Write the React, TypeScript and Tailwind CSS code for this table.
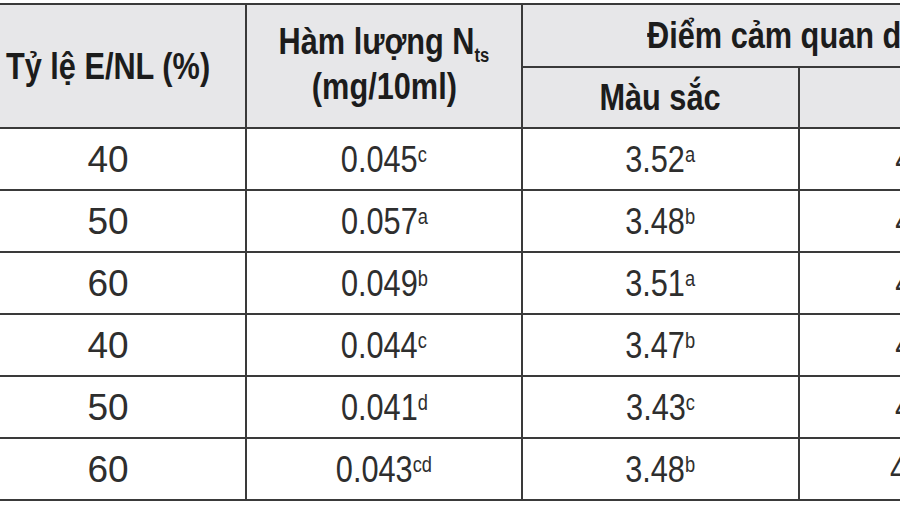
import React from 'react';

type Row = {
  ratio: string;
  nts: string;
  ntsSup: string;
  mau: string;
  mauSup: string;
  mui: string;
  muiSup: string;
  vi: string;
  viSup: string;
};

const rows: Row[] = [
  { ratio: '40', nts: '0.045', ntsSup: 'c', mau: '3.52', mauSup: 'a', mui: '4.26', muiSup: 'a', vi: '4.12', viSup: 'b' },
  { ratio: '50', nts: '0.057', ntsSup: 'a', mau: '3.48', mauSup: 'b', mui: '4.31', muiSup: 'a', vi: '4.35', viSup: 'a' },
  { ratio: '60', nts: '0.049', ntsSup: 'b', mau: '3.51', mauSup: 'a', mui: '4.18', muiSup: 'b', vi: '4.20', viSup: 'b' },
  { ratio: '40', nts: '0.044', ntsSup: 'c', mau: '3.47', mauSup: 'b', mui: '4.15', muiSup: 'b', vi: '4.08', viSup: 'c' },
  { ratio: '50', nts: '0.041', ntsSup: 'd', mau: '3.43', mauSup: 'c', mui: '4.02', muiSup: 'c', vi: '3.96', viSup: 'd' },
  { ratio: '60', nts: '0.043', ntsSup: 'cd', mau: '3.48', mauSup: 'b', mui: '4.10', muiSup: 'bc', vi: '4.01', viSup: 'cd' },
];

// the scan is squeezed sideways, so most text is narrowed to match
function Narrow({ children }: { children: React.ReactNode }) {
  return <span className="inline-block scale-x-[0.83] whitespace-nowrap">{children}</span>;
}

function Value({ v, sup }: { v: string; sup: string }) {
  return (
    <Narrow>
      {v}
      <sup className="text-[22px] -top-[0.45em]">{sup}</sup>
    </Narrow>
  );
}

export default function App() {
  const cell = 'border-2 border-[#3a3a3a] p-0 text-center align-middle';
  const head = `${cell} bg-[#e7e7e9] font-bold text-[#1c1c1c]`;
  const body = `${cell} h-[62px] text-[#2e2e2e]`;

  return (
    <div className="w-[900px] h-[506px] overflow-hidden bg-white pt-[3px] font-['Liberation_Sans',Arial,sans-serif] text-[37px] leading-none">
      <table className="ml-[-31px] w-[1615px] table-fixed border-collapse">
        <colgroup>
          <col className="w-[276px]" />
          <col className="w-[276px]" />
          <col className="w-[277px]" />
          <col className="w-[262px]" />
          <col className="w-[262px]" />
          <col className="w-[262px]" />
        </colgroup>
        <thead>
          <tr className="h-[63px]">
            <th rowSpan={2} className={head}>
              <Narrow>Tỷ lệ E/NL (%)</Narrow>
            </th>
            <th rowSpan={2} className={`${head} leading-[45px] pb-[4px]`}>
              <Narrow>
                Hàm lượng N<sub className="text-[20px] -bottom-[0.4em]">ts</sub>
              </Narrow>
              <br />
              <Narrow>(mg/10ml)</Narrow>
            </th>
            <th colSpan={4} className={`${head} text-left pl-[124px]`}>
              <span className="inline-block origin-left scale-x-[0.83] whitespace-nowrap">
                Điểm cảm quan dịch thủy phân
              </span>
            </th>
          </tr>
          <tr className="h-[61px]">
            <th className={head}>
              <Narrow>Màu sắc</Narrow>
            </th>
            <th className={head}>
              <Narrow>Mùi</Narrow>
            </th>
            <th className={head}>
              <Narrow>Vị</Narrow>
            </th>
            <th className={head}>
              <Narrow>Trạng thái</Narrow>
            </th>
          </tr>
        </thead>
        <tbody>
          {rows.map((r, i) => (
            <tr key={i}>
              <td className={body}>{r.ratio}</td>
              <td className={body}>
                <Value v={r.nts} sup={r.ntsSup} />
              </td>
              <td className={body}>
                <Value v={r.mau} sup={r.mauSup} />
              </td>
              <td className={body}>
                <Value v={r.mui} sup={r.muiSup} />
              </td>
              <td className={body}>
                <Value v={r.vi} sup={r.viSup} />
              </td>
              <td className={body}>
                <Value v="4.30" sup="a" />
              </td>
            </tr>
          ))}
        </tbody>
      </table>
    </div>
  );
}
